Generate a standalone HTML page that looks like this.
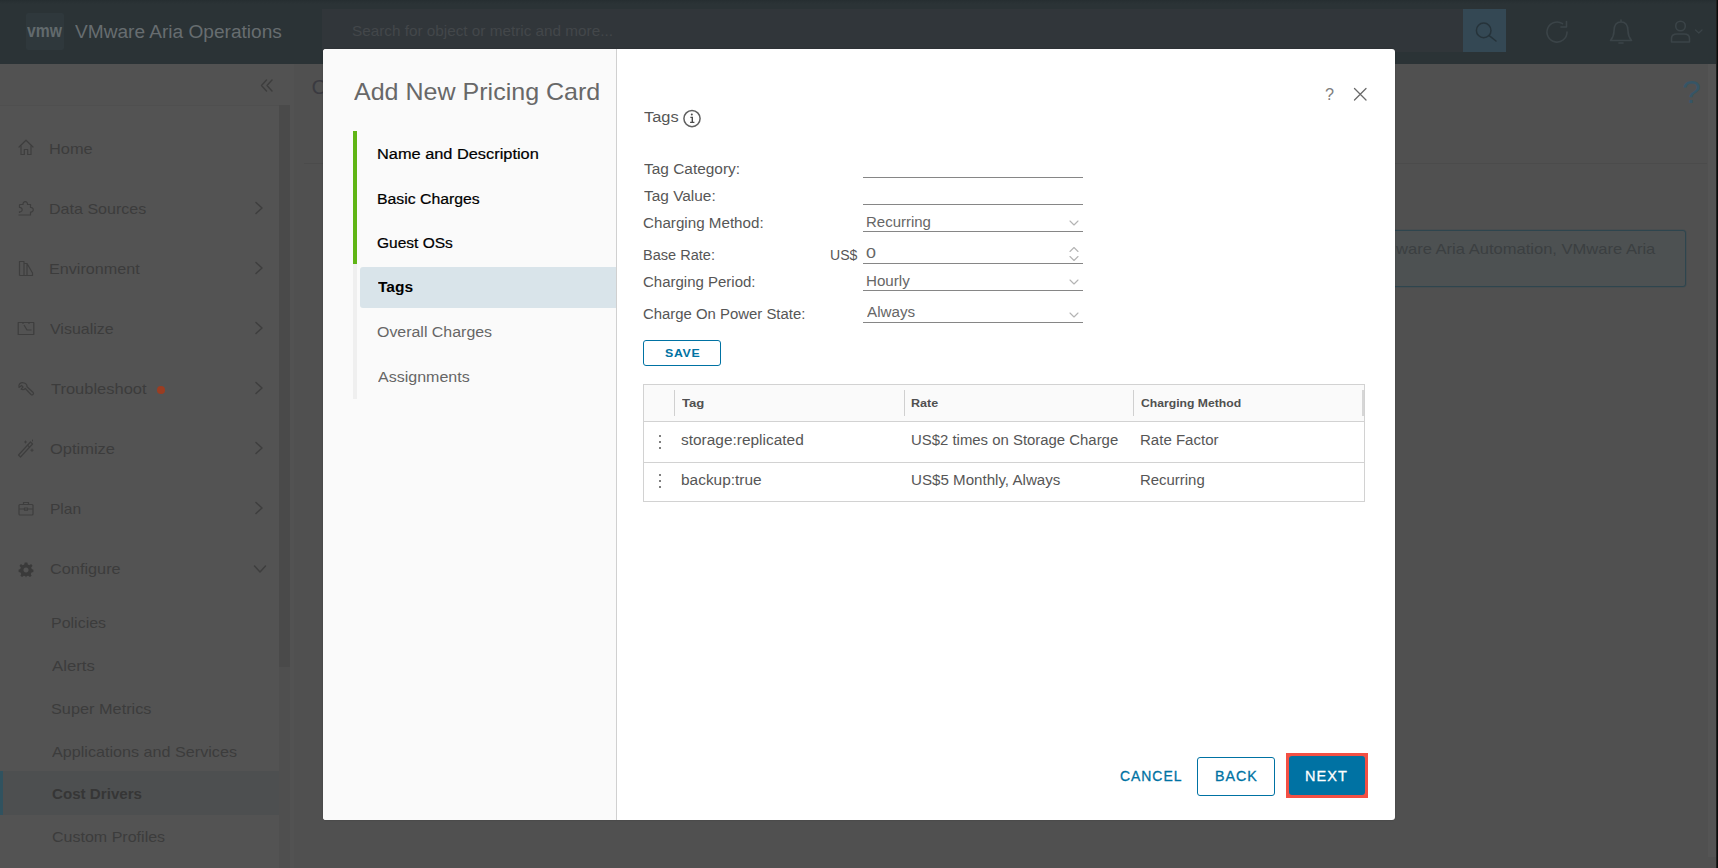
<!DOCTYPE html>
<html lang="en">
<head>
<meta charset="utf-8">
<title>VMware Aria Operations</title>
<style>
html,body{margin:0;padding:0;}
body{width:1718px;height:868px;overflow:hidden;position:relative;background:#505050;font-family:"Liberation Sans",sans-serif;color:#333;}
.a{position:absolute;}
.t{position:absolute;white-space:nowrap;line-height:1;transform-origin:0 0;}
svg{position:absolute;overflow:visible;}
</style>
</head>
<body>
<!-- header -->
<div class="a" style="left:0;top:0;width:1718px;height:64px;background:#2b3336;"></div>
<div class="a" style="left:0;top:0;width:1718px;height:4px;background:linear-gradient(#262e31,#2b3336);"></div>
<div class="a" style="left:26px;top:13px;width:38px;height:37px;background:#2f383c;border-radius:2px;"></div>
<div class="a" style="left:322px;top:9px;width:1141px;height:43px;background:#31363a;"></div>
<div class="a" style="left:1463px;top:9px;width:43px;height:43px;background:#344854;"></div>

<div class="a" style="left:1716px;top:0;width:2px;height:868px;background:linear-gradient(to right,#2a2a2a,#000);z-index:5;"></div>
<!-- sidebar -->
<div class="a" style="left:0;top:64px;width:293.500px;height:804px;background:#525252;"></div>
<div class="a" style="left:0;top:104.500px;width:279px;height:764px;background:#535353;border-top:1px solid #4f4f4f;"></div>
<div class="a" style="left:279px;top:105px;width:11px;height:763px;background:#4f4f4f;"></div>
<div class="a" style="left:279.300px;top:105px;width:10.700px;height:561.600px;background:#4a4a4a;"></div>
<div class="a" style="left:0;top:771px;width:279px;height:44px;background:#4d4f50;"></div>
<div class="a" style="left:0;top:771px;width:2.5px;height:44px;background:#30525f;"></div>
<div class="a" style="left:157.200px;top:386.400px;width:7.600px;height:7.600px;border-radius:50%;background:#9a3d22;"></div>

<!-- main (dimmed) -->
<div class="a" style="left:304px;top:163px;width:1403px;height:1px;background:#4b4b4b;"></div>
<div class="a" style="left:1300px;top:229.5px;width:385.5px;height:57px;box-sizing:border-box;background:#4d5152;border:1px solid #2e454e;box-shadow:0 0 0 .5px rgba(46,69,78,.45);border-radius:3px;"></div>

<div class="t" style="left:311.500px;top:76.400px;font-size:21px;color:#3a3a40;">C</div>

<div class="a" style="left:1707.500px;top:64px;width:8.500px;height:793px;background:#545454;"></div>
<!-- modal -->
<div class="a" style="left:323px;top:49px;width:1072.300px;height:771.300px;background:#fff;border-radius:3px;box-shadow:0 0 1.500px rgba(0,0,0,.3);"></div>
<div class="a" style="left:323px;top:49px;width:294px;height:771.300px;background:#fafafa;border-right:1px solid #d0d0d0;border-radius:3px 0 0 3px;box-sizing:border-box;"></div>
<div class="a" style="left:353px;top:131px;width:4px;height:268px;background:#efefef;"></div>
<div class="a" style="left:353px;top:131px;width:4px;height:133px;background:#60b515;"></div>
<div class="a" style="left:360px;top:267px;width:256px;height:41px;background:#d9e4ea;border-radius:3px 0 0 3px;"></div>

<!-- inputs -->
<div class="a" style="left:863px;top:177px;width:220px;height:1px;background:#868686;"></div>
<div class="a" style="left:863px;top:204px;width:220px;height:1px;background:#868686;"></div>
<div class="a" style="left:863px;top:231px;width:220px;height:1px;background:#868686;"></div>
<div class="a" style="left:863px;top:263px;width:220px;height:1px;background:#868686;"></div>
<div class="a" style="left:863px;top:290px;width:220px;height:1px;background:#868686;"></div>
<div class="a" style="left:863px;top:322px;width:220px;height:1px;background:#868686;"></div>

<div class="a" style="left:643px;top:340px;width:78px;height:26px;box-sizing:border-box;border:1px solid #0072a3;border-radius:3px;"></div>

<!-- table -->
<div class="a" style="left:643px;top:384px;width:722px;height:118px;box-sizing:border-box;border:1px solid #d2d2d2;background:#fff;"></div>
<div class="a" style="left:644px;top:385px;width:720px;height:36px;background:#fafafa;border-bottom:1px solid #d2d2d2;"></div>
<div class="a" style="left:644px;top:462px;width:720px;height:1px;background:#d2d2d2;"></div>
<div class="a" style="left:674px;top:390px;width:1px;height:26px;background:#d0d0d0;"></div>
<div class="a" style="left:904px;top:390px;width:1px;height:26px;background:#d0d0d0;"></div>
<div class="a" style="left:1133px;top:390px;width:1px;height:26px;background:#d0d0d0;"></div>
<div class="a" style="left:1362px;top:390px;width:2px;height:26px;background:#d6d6d6;"></div>

<!-- footer buttons -->
<div class="a" style="left:1197px;top:757px;width:78px;height:39px;box-sizing:border-box;border:1px solid #0072a3;border-radius:3px;"></div>
<div class="a" style="left:1286px;top:753px;width:82px;height:45px;background:#f35044;"></div>
<div class="a" style="left:1289px;top:756px;width:76px;height:39px;background:#0072a3;border-radius:3px;"></div>

<div class="t" style="left:27.33px;top:22.90px;font-size:17.5px;color:#626a6d;font-weight:bold;transform:scaleX(0.8987);">vmw</div>
<div class="t" style="left:74.85px;top:22.60px;font-size:18px;color:#676d70;font-weight:normal;transform:scaleX(1.0604);">VMware Aria Operations</div>
<div class="t" style="left:351.59px;top:24.40px;font-size:14.5px;color:#43474a;font-weight:normal;transform:scaleX(1.0547);">Search for object or metric and more...</div>
<div class="t" style="left:49.05px;top:141.00px;font-size:15px;color:#3c3c3c;font-weight:normal;transform:scaleX(1.0930);">Home</div>
<div class="t" style="left:49.07px;top:201.00px;font-size:15px;color:#3c3c3c;font-weight:normal;transform:scaleX(1.0711);">Data Sources</div>
<div class="t" style="left:49.06px;top:261.00px;font-size:15px;color:#3c3c3c;font-weight:normal;transform:scaleX(1.0767);">Environment</div>
<div class="t" style="left:49.73px;top:321.00px;font-size:15px;color:#3c3c3c;font-weight:normal;transform:scaleX(1.0655);">Visualize</div>
<div class="t" style="left:50.67px;top:381.00px;font-size:15px;color:#3c3c3c;font-weight:normal;transform:scaleX(1.0986);">Troubleshoot</div>
<div class="t" style="left:49.69px;top:441.00px;font-size:15px;color:#3c3c3c;font-weight:normal;transform:scaleX(1.0979);">Optimize</div>
<div class="t" style="left:49.50px;top:501.00px;font-size:15px;color:#3c3c3c;font-weight:normal;transform:scaleX(1.0357);">Plan</div>
<div class="t" style="left:49.67px;top:561.00px;font-size:15px;color:#3c3c3c;font-weight:normal;transform:scaleX(1.0861);">Configure</div>
<div class="t" style="left:51.07px;top:614.70px;font-size:15px;color:#3c3c3c;font-weight:normal;transform:scaleX(1.0650);">Policies</div>
<div class="t" style="left:52.15px;top:657.60px;font-size:15px;color:#3c3c3c;font-weight:normal;transform:scaleX(1.1153);">Alerts</div>
<div class="t" style="left:50.70px;top:700.70px;font-size:15px;color:#3c3c3c;font-weight:normal;transform:scaleX(1.0864);">Super Metrics</div>
<div class="t" style="left:52.16px;top:743.50px;font-size:15px;color:#3c3c3c;font-weight:normal;transform:scaleX(1.0768);">Applications and Services</div>
<div class="t" style="left:51.83px;top:786.20px;font-size:15px;color:#363636;font-weight:bold;transform:scaleX(1.0094);">Cost Drivers</div>
<div class="t" style="left:51.68px;top:829.20px;font-size:15px;color:#3c3c3c;font-weight:normal;transform:scaleX(1.0686);">Custom Profiles</div>
<div class="t" style="left:1395.73px;top:240.50px;font-size:15px;color:#3b3f41;font-weight:normal;transform:scaleX(1.1029);">ware Aria Automation, VMware Aria</div>
<div class="t" style="left:354.37px;top:80.10px;font-size:24px;color:#686868;font-weight:normal;transform:scaleX(1.0432);">Add New Pricing Card</div>
<div class="t" style="left:376.71px;top:147.30px;font-size:14px;color:#000;font-weight:normal;transform:scaleX(1.1678);-webkit-text-stroke:.2px #000;">Name and Description</div>
<div class="t" style="left:376.74px;top:191.60px;font-size:14px;color:#000;font-weight:normal;transform:scaleX(1.1284);-webkit-text-stroke:.2px #000;">Basic Charges</div>
<div class="t" style="left:376.99px;top:235.80px;font-size:14px;color:#000;font-weight:normal;transform:scaleX(1.1081);-webkit-text-stroke:.2px #000;">Guest OSs</div>
<div class="t" style="left:378.03px;top:280.30px;font-size:14px;color:#000;font-weight:bold;transform:scaleX(1.1070);">Tags</div>
<div class="t" style="left:377.01px;top:325.40px;font-size:14px;color:#666;font-weight:normal;transform:scaleX(1.1375);">Overall Charges</div>
<div class="t" style="left:378.03px;top:370.10px;font-size:14px;color:#666;font-weight:normal;transform:scaleX(1.1446);">Assignments</div>
<div class="t" style="left:643.98px;top:109.70px;font-size:14px;color:#565656;font-weight:normal;transform:scaleX(1.1705);">Tags</div>
<div class="t" style="left:644.01px;top:162.20px;font-size:14px;color:#565656;font-weight:normal;transform:scaleX(1.1020);">Tag Category:</div>
<div class="t" style="left:644.01px;top:188.90px;font-size:14px;color:#565656;font-weight:normal;transform:scaleX(1.1011);">Tag Value:</div>
<div class="t" style="left:643.19px;top:215.90px;font-size:14px;color:#565656;font-weight:normal;transform:scaleX(1.0840);">Charging Method:</div>
<div class="t" style="left:643.03px;top:248.00px;font-size:14px;color:#565656;font-weight:normal;transform:scaleX(1.0391);">Base Rate:</div>
<div class="t" style="left:830.18px;top:248.00px;font-size:14px;color:#565656;font-weight:normal;transform:scaleX(1.0052);">US$</div>
<div class="t" style="left:643.20px;top:275.10px;font-size:14px;color:#565656;font-weight:normal;transform:scaleX(1.0709);">Charging Period:</div>
<div class="t" style="left:643.21px;top:306.80px;font-size:14px;color:#565656;font-weight:normal;transform:scaleX(1.0644);">Charge On Power State:</div>
<div class="t" style="left:866.00px;top:214.70px;font-size:14px;color:#666;font-weight:normal;transform:scaleX(1.0697);">Recurring</div>
<div class="t" style="left:866.23px;top:246.40px;font-size:14px;color:#666;font-weight:normal;transform:scaleX(1.2795);">0</div>
<div class="t" style="left:865.99px;top:273.70px;font-size:14px;color:#666;font-weight:normal;transform:scaleX(1.0822);">Hourly</div>
<div class="t" style="left:867.25px;top:305.20px;font-size:14px;color:#666;font-weight:normal;transform:scaleX(1.0848);">Always</div>
<div class="t" style="left:665.09px;top:347.90px;font-size:11.5px;color:#0072a3;font-weight:bold;transform:scaleX(1.0740);letter-spacing:0.6px;">SAVE</div>
<div class="t" style="left:681.85px;top:397.50px;font-size:11.5px;color:#505050;font-weight:bold;transform:scaleX(1.1415);">Tag</div>
<div class="t" style="left:910.77px;top:397.50px;font-size:11.5px;color:#505050;font-weight:bold;transform:scaleX(1.0911);">Rate</div>
<div class="t" style="left:1140.64px;top:397.50px;font-size:11.5px;color:#505050;font-weight:bold;transform:scaleX(1.0584);">Charging Method</div>
<div class="t" style="left:680.98px;top:433.20px;font-size:14px;color:#565656;font-weight:normal;transform:scaleX(1.1030);">storage:replicated</div>
<div class="t" style="left:910.63px;top:433.20px;font-size:14px;color:#565656;font-weight:normal;transform:scaleX(1.0650);">US$2 times on Storage Charge</div>
<div class="t" style="left:1140.19px;top:433.20px;font-size:14px;color:#565656;font-weight:normal;transform:scaleX(1.0735);">Rate Factor</div>
<div class="t" style="left:680.76px;top:473.30px;font-size:14px;color:#565656;font-weight:normal;transform:scaleX(1.1030);">backup:true</div>
<div class="t" style="left:910.61px;top:473.30px;font-size:14px;color:#565656;font-weight:normal;transform:scaleX(1.0802);">US$5 Monthly, Always</div>
<div class="t" style="left:1140.20px;top:473.30px;font-size:14px;color:#565656;font-weight:normal;transform:scaleX(1.0663);">Recurring</div>
<div class="t" style="left:1120.06px;top:768.80px;font-size:14px;color:#0072a3;font-weight:normal;transform:scaleX(0.9938);letter-spacing:1px;-webkit-text-stroke:.3px #0072a3;">CANCEL</div>
<div class="t" style="left:1214.55px;top:768.80px;font-size:14px;color:#0072a3;font-weight:normal;transform:scaleX(1.0185);letter-spacing:1px;-webkit-text-stroke:.3px #0072a3;">BACK</div>
<div class="t" style="left:1304.63px;top:768.80px;font-size:14px;color:#fff;font-weight:normal;transform:scaleX(1.0366);letter-spacing:1px;-webkit-text-stroke:.3px #fff;">NEXT</div>
<div class="t" style="left:1325.38px;top:85.80px;font-size:17px;color:#808080;font-weight:normal;transform:scaleX(0.9561);">?</div>
<div class="t" style="left:1682.38px;top:76.00px;font-size:32px;color:#365566;font-weight:normal;transform:scaleX(1.0586);">?</div>
<!-- header icons -->
<svg style="left:1472px;top:18px" width="28" height="28" viewBox="0 0 28 28" fill="none" stroke="#26333a" stroke-width="1.5" stroke-linecap="round"><circle cx="11.7" cy="12.4" r="7.3"/><path d="M17.2 17.6 L24 23"/></svg>
<svg style="left:1545px;top:20px" width="24" height="24" viewBox="0 0 24 24" fill="none" stroke="#3b4448" stroke-width="1.6" stroke-linecap="round" stroke-linejoin="round"><path d="M22 12 A10 10 0 1 1 17.5 3.7"/><path d="M21.5 1.5 V7 H16"/></svg>
<svg style="left:1609px;top:19px" width="24" height="26" viewBox="0 0 24 26" fill="none" stroke="#3b4448" stroke-width="1.6" stroke-linecap="round" stroke-linejoin="round"><path d="M12 1 V3 M12 3 C6.5 3 5 8 5 12 C5 17 3.5 19 1.5 21.5 H22.5 C20.5 19 19 17 19 12 C19 8 17.500 3 12 3 Z"/><path d="M10 24 H14"/></svg>
<svg style="left:1670px;top:20px" width="34" height="24" viewBox="0 0 34 24" fill="none" stroke="#3b4448" stroke-width="1.6" stroke-linecap="round" stroke-linejoin="round"><circle cx="10.500" cy="6" r="4.8"/><path d="M1.5 22 V18.500 C1.5 15.500 4 14 7 14 H14 C17 14 19.500 15.500 19.500 18.500 V22 Z"/><path d="M25.500 10 L28.800 13 L32 10" stroke-width="1.2"/></svg>
<!-- collapse -->
<svg style="left:260px;top:79px" width="14" height="13" viewBox="0 0 14 13" fill="none" stroke="#3d3d3d" stroke-width="1.4" stroke-linecap="round" stroke-linejoin="round"><path d="M6.500 1 L1.500 6.500 L6.500 12 M12 1 L7 6.500 L12 12"/></svg>
<!-- nav icons -->

<svg style="left:18px;top:139px" width="16" height="17" viewBox="0 0 16 17" fill="none" stroke="#3e3e3e" stroke-width="1.2" stroke-linejoin="round" stroke-linecap="round"><path d="M1 8 L8 1.200 L15 8"/><path d="M3 7 V15.500 H6.300 V10.500 H9.700 V15.500 H13 V7"/></svg>
<svg style="left:17px;top:200px" width="18" height="17" viewBox="0 0 18 17" fill="none" stroke="#3e3e3e" stroke-width="1.200" stroke-linejoin="round"><path d="M2.500 4.500 H6 A2.300 2.300 0 1 1 10.500 4.500 H13.500 V7.500 A2.300 2.300 0 1 1 13.500 12 V15 H1.500 M2.500 4.500 V7.500 A2.200 2.200 0 1 1 2.500 11.800 V13"/></svg>
<svg style="left:18px;top:260px" width="17" height="17" viewBox="0 0 17 17" fill="none" stroke="#3e3e3e" stroke-width="1.200" stroke-linejoin="round"><path d="M1.500 15.500 V1.500 H6 V15.500 M6 3.500 H9 L14.500 13 V15.500 H1.500 M9 3.500 V15.500"/></svg>
<svg style="left:17px;top:321px" width="18" height="15" viewBox="0 0 18 15" fill="none" stroke="#3e3e3e" stroke-width="1.200" stroke-linejoin="round"><rect x="1.200" y="1.500" width="15.600" height="12"/><path d="M6 1 V3 M12 1 V3 M7 4 L10 9 H14.500"/></svg>
<svg style="left:17px;top:381px" width="18" height="17" viewBox="0 0 18 17" fill="none" stroke="#3e3e3e" stroke-width="1.200" stroke-linejoin="round" stroke-linecap="round"><path d="M6.500 1.800 A3.600 3.600 0 0 0 2 6.500 L4.500 4.500 L6 6 L4.200 8.200 A3.600 3.600 0 0 0 8.300 7.500 L14 13.500 A1.500 1.500 0 0 0 16.200 11.500 L10 5.800 A3.600 3.600 0 0 0 6.500 1.800 Z"/></svg>
<svg style="left:17px;top:439px" width="18" height="19" viewBox="0 0 18 19" fill="none" stroke="#3e3e3e" stroke-width="1.200" stroke-linejoin="round" stroke-linecap="round"><path d="M1.500 16 L13.500 3 L15.500 5 L3.500 18 Z"/><path d="M10.500 6.200 L12.500 8.200"/><path d="M8.500 2 V4 M7.500 3 H9.500 M15 10 V12.500 M13.800 11.200 H16.200 M15.500 1 V2" stroke-width="1"/></svg>
<svg style="left:18px;top:501px" width="16" height="15" viewBox="0 0 16 15" fill="none" stroke="#3e3e3e" stroke-width="1.200" stroke-linejoin="round"><rect x="1" y="3.500" width="14" height="10.500" rx="1"/><path d="M5.500 3.500 V1.500 H10.500 V3.500 M1 8 H6.500 M9.500 8 H15"/><rect x="6.500" y="7" width="3" height="2.200"/></svg>
<svg style="left:18px;top:562px" width="16" height="16" viewBox="-8 -8 16 16" fill="#3a3a3a"><path fill-rule="evenodd" d="M-1.300 -7.400 H1.300 L1.800 -5.400 L3.300 -4.700 L5.100 -5.900 L6.500 -4.200 L5.200 -2.500 L5.700 -0.900 L7.400 -0.200 V2 L5.500 2.400 L4.700 3.900 L5.600 5.700 L3.900 7 L2.300 5.700 L0.800 6 L0 7.600 L-0.800 6 L-2.300 5.700 L-3.900 7 L-5.600 5.700 L-4.700 3.900 L-5.500 2.400 L-7.400 2 V-0.200 L-5.700 -0.900 L-5.200 -2.500 L-6.500 -4.200 L-5.100 -5.900 L-3.300 -4.700 L-1.800 -5.400 Z M0 -2.600 A2.600 2.600 0 1 0 0.010 -2.600 Z"/></svg>
<svg style="left:254px;top:201px" width="10" height="14" viewBox="0 0 10 14" fill="none" stroke="#3e3e3e" stroke-width="1.5" stroke-linecap="round" stroke-linejoin="round"><path d="M2 1.500 L8 7 L2 12.500"/></svg>
<svg style="left:254px;top:261px" width="10" height="14" viewBox="0 0 10 14" fill="none" stroke="#3e3e3e" stroke-width="1.5" stroke-linecap="round" stroke-linejoin="round"><path d="M2 1.500 L8 7 L2 12.500"/></svg>
<svg style="left:254px;top:321px" width="10" height="14" viewBox="0 0 10 14" fill="none" stroke="#3e3e3e" stroke-width="1.5" stroke-linecap="round" stroke-linejoin="round"><path d="M2 1.500 L8 7 L2 12.500"/></svg>
<svg style="left:254px;top:381px" width="10" height="14" viewBox="0 0 10 14" fill="none" stroke="#3e3e3e" stroke-width="1.5" stroke-linecap="round" stroke-linejoin="round"><path d="M2 1.500 L8 7 L2 12.500"/></svg>
<svg style="left:254px;top:441px" width="10" height="14" viewBox="0 0 10 14" fill="none" stroke="#3e3e3e" stroke-width="1.5" stroke-linecap="round" stroke-linejoin="round"><path d="M2 1.500 L8 7 L2 12.500"/></svg>
<svg style="left:254px;top:501px" width="10" height="14" viewBox="0 0 10 14" fill="none" stroke="#3e3e3e" stroke-width="1.5" stroke-linecap="round" stroke-linejoin="round"><path d="M2 1.500 L8 7 L2 12.500"/></svg>
<svg style="left:253px;top:564px" width="14" height="10" viewBox="0 0 14 10" fill="none" stroke="#3e3e3e" stroke-width="1.5" stroke-linecap="round" stroke-linejoin="round"><path d="M1.500 2 L7 8 L12.500 2"/></svg>
<svg style="left:683px;top:110px" width="19" height="19" viewBox="0 0 19 19" fill="none" stroke="#606060" stroke-width="1.500"><circle cx="9" cy="8.600" r="8.100"/><path d="M7.400 7.400 H9.300 V12.300 M7.100 12.400 H11.400" stroke="#4a4a4a" stroke-width="1.400"/><circle cx="8.800" cy="4.600" r="1" fill="#4a4a4a" stroke="none"/></svg>
<svg style="left:1353px;top:87px" width="15" height="15" viewBox="0 0 15 15" fill="none" stroke="#6a6a6a" stroke-width="1.300" stroke-linecap="round"><path d="M1.500 1.500 L13 13 M13 1.500 L1.500 13"/></svg>
<svg style="left:1069px;top:220px" width="10" height="6" viewBox="0 0 10 6" fill="none" stroke="#b4b4b4" stroke-width="1.100" stroke-linecap="round" stroke-linejoin="round"><path d="M1 1 L5 5 L9 1"/></svg>
<svg style="left:1069px;top:279px" width="10" height="6" viewBox="0 0 10 6" fill="none" stroke="#b4b4b4" stroke-width="1.100" stroke-linecap="round" stroke-linejoin="round"><path d="M1 1 L5 5 L9 1"/></svg>
<svg style="left:1069px;top:311.5px" width="10" height="6" viewBox="0 0 10 6" fill="none" stroke="#b4b4b4" stroke-width="1.100" stroke-linecap="round" stroke-linejoin="round"><path d="M1 1 L5 5 L9 1"/></svg>
<svg style="left:1069px;top:246px" width="10" height="16" viewBox="0 0 10 16" fill="none" stroke="#b4b4b4" stroke-width="1.100" stroke-linecap="round" stroke-linejoin="round"><path d="M1 5.500 L5 1.500 L9 5.500 M1 10.500 L5 14.500 L9 10.500"/></svg>
<div class="a" style="left:658.5px;top:434.5px;width:2px;height:2px;border-radius:50%;background:#555;"></div>
<div class="a" style="left:658.5px;top:440.8px;width:2px;height:2px;border-radius:50%;background:#555;"></div>
<div class="a" style="left:658.5px;top:447.2px;width:2px;height:2px;border-radius:50%;background:#555;"></div>
<div class="a" style="left:658.5px;top:473.6px;width:2px;height:2px;border-radius:50%;background:#555;"></div>
<div class="a" style="left:658.5px;top:479.9px;width:2px;height:2px;border-radius:50%;background:#555;"></div>
<div class="a" style="left:658.5px;top:486.3px;width:2px;height:2px;border-radius:50%;background:#555;"></div>

</body>
</html>
